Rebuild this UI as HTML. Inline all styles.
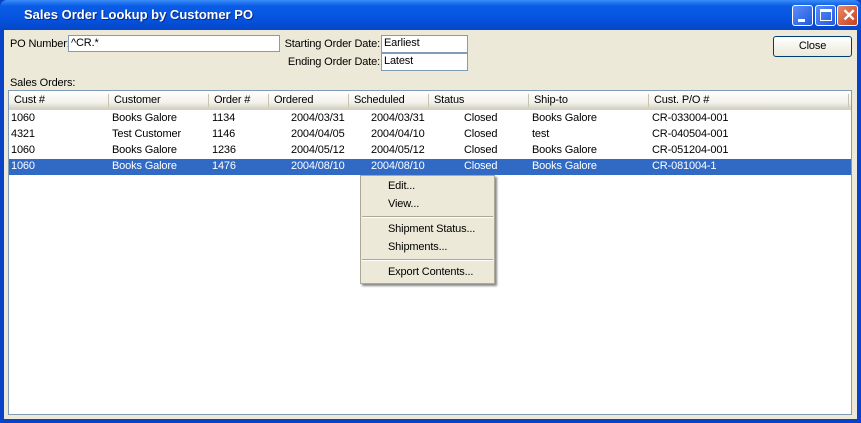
<!DOCTYPE html><html><head><style>
*{margin:0;padding:0;box-sizing:border-box}
body{width:861px;height:423px;overflow:hidden;font-family:"Liberation Sans",sans-serif;font-size:11px;background:#0842c8;position:relative;letter-spacing:-0.15px}
.a{position:absolute;white-space:nowrap}
#tb{position:absolute;left:0;top:0;width:861px;height:30px;background:linear-gradient(#3a8cf8,#0a5ce6 20%,#0554e0 60%,#0646c8);border-radius:7px 7px 0 0}
#body{position:absolute;left:4px;top:30px;width:853px;height:389px;background:#ece9d8}
.inp{position:absolute;background:#fff;border:1px solid #7f9db9;padding:1px 2px;font-size:11px;white-space:nowrap}
.tbtn{position:absolute;top:5px;width:21px;height:21px;border:1px solid #fff;border-radius:3px;background:linear-gradient(135deg,#5a8ef8,#2458e0)}
.row div{position:absolute;white-space:nowrap}
.r{position:absolute;white-space:nowrap;text-align:right;width:200px}
</style></head><body>
<div id="tb"></div>
<div class="a" style="left:24px;top:7px;color:#fff;font-weight:bold;font-size:13px;text-shadow:1px 1px #0a2a80;letter-spacing:0">Sales Order Lookup by Customer PO</div>
<div class="tbtn" style="left:792px"><div style="position:absolute;left:5px;top:13px;width:7px;height:3px;background:#fff"></div></div>
<div class="tbtn" style="left:815px"><div style="position:absolute;left:4px;top:3px;width:12px;height:12px;border:1px solid #fff;border-top:3px solid #fff"></div></div>
<div class="tbtn" style="left:837px;background:linear-gradient(135deg,#e88a6a,#c8401c)"><div class="a" style="left:4px;top:0px;color:#fff;font-size:17px;font-weight:bold">✕</div></div>
<div id="body"></div>
<div class="a" style="left:10px;top:38px">PO Number:</div>
<div class="inp" style="left:68px;top:35px;width:212px;height:17px">^CR.*</div>
<div class="r" style="left:180px;top:38px">Starting Order Date:</div>
<div class="inp" style="left:381px;top:35px;width:87px;height:18px">Earliest</div>
<div class="r" style="left:180px;top:56px">Ending Order Date:</div>
<div class="inp" style="left:381px;top:53px;width:87px;height:18px">Latest</div>
<div class="a" style="left:773px;top:36px;width:79px;height:21px;border:1px solid #003c74;border-radius:3px;background:linear-gradient(#fff,#ece9d8);text-align:center;line-height:19px;font-size:11px">Close</div>
<div class="a" style="left:10px;top:77px">Sales Orders:</div>
<div class="a" style="left:8px;top:90px;width:844px;height:325px;border:1px solid #7f9db9;background:#fff"></div>
<div class="a" style="left:9px;top:91px;width:842px;height:19px;background:linear-gradient(#fff,#f2f1ea 70%,#d8d5c8);border-bottom:2px solid #d6d2c2"></div>
<div class="row" style="position:absolute;left:0;top:94px">
<div style="left:14px">Cust #</div><div style="left:114px">Customer</div><div style="left:214px">Order #</div><div style="left:274px">Ordered</div><div style="left:354px">Scheduled</div><div style="left:434px">Status</div><div style="left:534px">Ship-to</div><div style="left:654px">Cust. P/O #</div>
</div>
<div style="position:absolute;top:94px;left:0">
<div class="a" style="left:108px;width:1px;height:13px;background:#c7c5b2"></div><div class="a" style="left:208px;width:1px;height:13px;background:#c7c5b2"></div><div class="a" style="left:268px;width:1px;height:13px;background:#c7c5b2"></div><div class="a" style="left:348px;width:1px;height:13px;background:#c7c5b2"></div><div class="a" style="left:428px;width:1px;height:13px;background:#c7c5b2"></div><div class="a" style="left:528px;width:1px;height:13px;background:#c7c5b2"></div><div class="a" style="left:648px;width:1px;height:13px;background:#c7c5b2"></div><div class="a" style="left:848px;width:1px;height:13px;background:#c7c5b2"></div>
</div>
<div class="a" style="left:9px;top:159px;width:842px;height:16px;background:#316ac5"></div>
<div class="row" style="position:absolute;left:0;top:112px"><div style="left:11px">1060</div><div style="left:112px">Books Galore</div><div style="left:212px">1134</div><div style="left:291px">2004/03/31</div><div style="left:371px">2004/03/31</div><div style="left:464px">Closed</div><div style="left:532px">Books Galore</div><div style="left:652px">CR-033004-001</div></div>
<div class="row" style="position:absolute;left:0;top:128px"><div style="left:11px">4321</div><div style="left:112px">Test Customer</div><div style="left:212px">1146</div><div style="left:291px">2004/04/05</div><div style="left:371px">2004/04/10</div><div style="left:464px">Closed</div><div style="left:532px">test</div><div style="left:652px">CR-040504-001</div></div>
<div class="row" style="position:absolute;left:0;top:144px"><div style="left:11px">1060</div><div style="left:112px">Books Galore</div><div style="left:212px">1236</div><div style="left:291px">2004/05/12</div><div style="left:371px">2004/05/12</div><div style="left:464px">Closed</div><div style="left:532px">Books Galore</div><div style="left:652px">CR-051204-001</div></div>
<div class="row" style="position:absolute;left:0;top:160px;color:#fff"><div style="left:11px">1060</div><div style="left:112px">Books Galore</div><div style="left:212px">1476</div><div style="left:291px">2004/08/10</div><div style="left:371px">2004/08/10</div><div style="left:464px">Closed</div><div style="left:532px">Books Galore</div><div style="left:652px">CR-081004-1</div></div>
<div class="a" style="left:360px;top:175px;width:135px;height:109px;background:#ece9d8;border:1px solid #aca899;box-shadow:2px 2px 2px #888"></div>
<div class="a" style="left:388px;top:180px">Edit...</div>
<div class="a" style="left:388px;top:198px">View...</div>
<div class="a" style="left:362px;top:216px;width:131px;height:2px;border-top:1px solid #aca899;border-bottom:1px solid #fff"></div>
<div class="a" style="left:388px;top:223px">Shipment Status...</div>
<div class="a" style="left:388px;top:241px">Shipments...</div>
<div class="a" style="left:362px;top:259px;width:131px;height:2px;border-top:1px solid #aca899;border-bottom:1px solid #fff"></div>
<div class="a" style="left:388px;top:266px">Export Contents...</div>
</body></html>
